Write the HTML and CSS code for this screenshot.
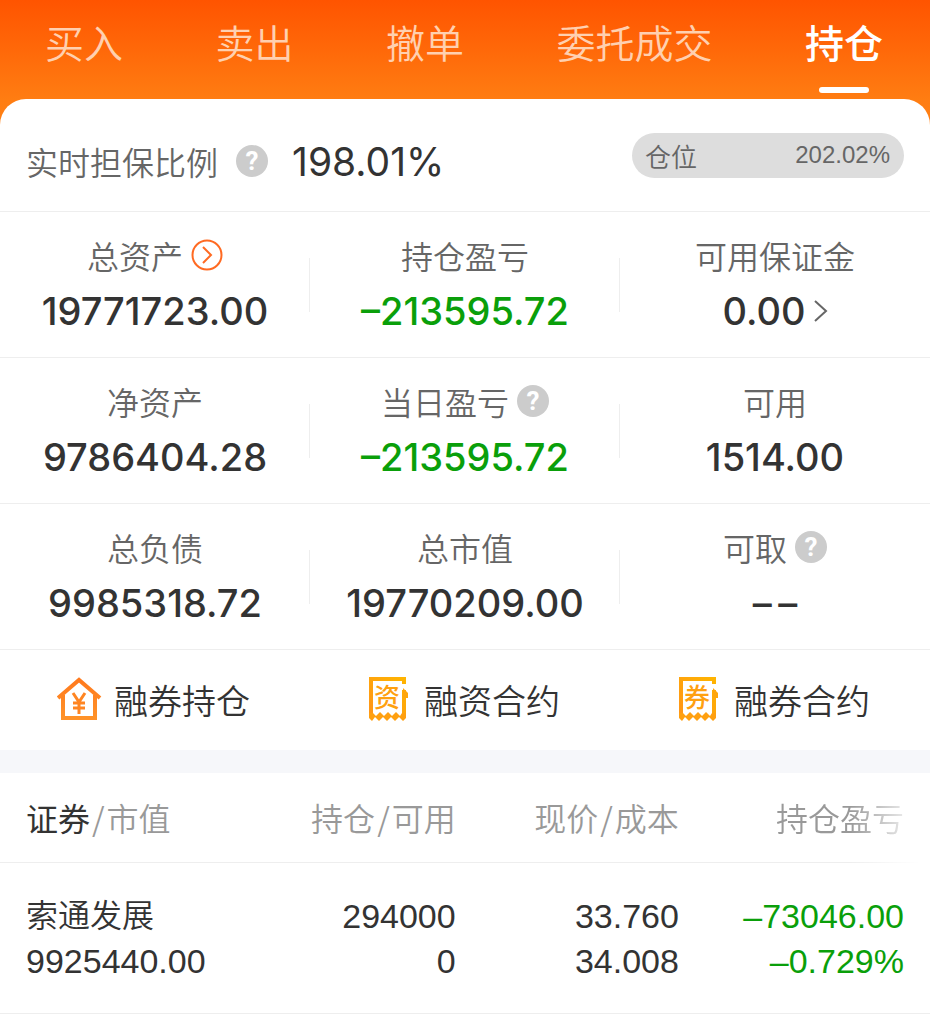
FILE: index.html
```html
<!DOCTYPE html>
<html lang="zh-CN">
<head>
    <meta charset="UTF-8">
    <meta name="viewport" content="width=device-width, initial-scale=1.0">
    <title>持仓</title>
    <link rel="stylesheet" href="styles.css">
</head>
<body>
    <nav class="tabs">
        <button class="tab">买入</button>
        <button class="tab">卖出</button>
        <button class="tab">撤单</button>
        <button class="tab">委托成交</button>
        <button class="tab active">持仓</button>
    </nav>

    <main class="card">
        <section class="summary">
            <span class="summary-label">实时担保比例</span>
            <button class="help">?</button>
            <span class="ratio">198.01%</span>
            <div class="position">
                <span>仓位</span>
                <span class="position-value">202.02%</span>
            </div>
        </section>

        <section class="metrics">
            <div class="metric">
                <div class="label">总资产
                    <button class="more" aria-label="总资产详情">
                        <svg width="32" height="32" viewBox="0 0 32 32" fill="none" stroke="#ff6a22" stroke-width="2">
                            <circle cx="16" cy="16" r="14.5"/>
                            <path d="M12 8l8 8-8 8"/>
                        </svg>
                    </button>
                </div>
                <div class="value">19771723.00</div>
            </div>
            <div class="metric">
                <div class="label">持仓盈亏</div>
                <div class="value down">–213595.72</div>
            </div>
            <div class="metric">
                <div class="label">可用保证金</div>
                <div class="value">0.00
                    <svg width="14" height="22" viewBox="0 0 14 22" fill="none" stroke="#666" stroke-width="2">
                        <path d="M1 1l11 10L1 21"/>
                    </svg>
                </div>
            </div>

            <div class="metric">
                <div class="label">净资产</div>
                <div class="value">9786404.28</div>
            </div>
            <div class="metric">
                <div class="label">当日盈亏 <button class="help">?</button></div>
                <div class="value down">–213595.72</div>
            </div>
            <div class="metric">
                <div class="label">可用</div>
                <div class="value">1514.00</div>
            </div>

            <div class="metric">
                <div class="label">总负债</div>
                <div class="value">9985318.72</div>
            </div>
            <div class="metric">
                <div class="label">总市值</div>
                <div class="value">19770209.00</div>
            </div>
            <div class="metric">
                <div class="label">可取 <button class="help">?</button></div>
                <div class="value">–&thinsp;–</div>
            </div>
        </section>

        <section class="actions">
            <a class="action" href="#">
                <svg width="46" height="46" viewBox="0 0 46 46">
                    <defs>
                        <linearGradient id="house" x1="0" y1="0" x2="0" y2="1">
                            <stop offset="0" stop-color="#ff7a1e"/>
                            <stop offset="1" stop-color="#ff9228"/>
                        </linearGradient>
                    </defs>
                    <path d="M1 22L22 4l21 18M6 19v23h32V19" fill="none" stroke="url(#house)" stroke-width="4"/>
                    <path d="M16 17l6 9 6-9M22 26v12M16 27h12M16 32h12" fill="none" stroke="#ff8522" stroke-width="3"/>
                </svg>
                融券持仓
            </a>
            <a class="action" href="#">
                <svg width="46" height="46" viewBox="0 0 46 46">
                    <defs>
                        <linearGradient id="bill" x1="1" y1="0" x2="0" y2="1">
                            <stop offset="0" stop-color="#ffb400"/>
                            <stop offset="1" stop-color="#ff9518"/>
                        </linearGradient>
                    </defs>
                    <path d="M37 8V3H4v37M37 14v26" fill="none" stroke="url(#bill)" stroke-width="4"/>
                    <path d="M36 12l5 5v5h-5z" fill="#ffa60c"/>
                    <path d="M2 37h4l3 3 4-4 4 4 4-4 4 4 4-4 4 4 2-3h4v5l-3 3-4-4-4 4-4-4-4 4-4-4-4 4-4-4-3 4-3-3z" fill="#ffa010"/>
                    <text class="icon-word" x="20" y="31" text-anchor="middle">资</text>
                </svg>
                融资合约
            </a>
            <a class="action" href="#">
                <svg width="46" height="46" viewBox="0 0 46 46">
                    <path d="M37 8V3H4v37M37 14v26" fill="none" stroke="url(#bill)" stroke-width="4"/>
                    <path d="M36 12l5 5v5h-5z" fill="#ffa60c"/>
                    <path d="M2 37h4l3 3 4-4 4 4 4-4 4 4 4-4 4 4 2-3h4v5l-3 3-4-4-4 4-4-4-4 4-4-4-4 4-4-4-3 4-3-3z" fill="#ffa010"/>
                    <text class="icon-word" x="20" y="31" text-anchor="middle">券</text>
                </svg>
                融券合约
            </a>
        </section>

        <table class="holdings">
            <thead>
                <tr>
                    <th><b>证券</b><i>/</i>市值</th>
                    <th>持仓<i>/</i>可用</th>
                    <th>现价<i>/</i>成本</th>
                    <th class="fade">持仓盈亏</th>
                </tr>
            </thead>
            <tbody>
                <tr>
                    <td><span class="name">索通发展</span><br>9925440.00</td>
                    <td>294000<br>0</td>
                    <td>33.760<br>34.008</td>
                    <td class="down">–73046.00<br>–0.729%</td>
                </tr>
            </tbody>
        </table>
    </main>
</body>
</html>
```
FILE: styles.css
```css
* {
    box-sizing: border-box;
}

body {
    margin: 0;
    background: #fff;
    color: #333;
    font-family: "Liberation Sans", "Noto Sans CJK SC", sans-serif;
    font-size: 32px;
    font-weight: 350;
}

button {
    padding: 0;
    border: none;
    background: none;
    font: inherit;
    cursor: pointer;
}

/* 顶部标签 */
.tabs {
    display: flex;
    justify-content: space-between;
    height: 126px;
    padding: 0 47px 0 45px;
    background: linear-gradient(#ff5400, #ff7d12 100px, #ff8014);
}

.tab {
    display: flex;
    flex-direction: column;
    align-items: center;
    height: 93px;
    padding-top: 21px;
    color: #ffd0b0;
    font-size: 39px;
    line-height: 48px;
}

.active {
    color: #fff;
    font-weight: 500;
}

.active::after {
    content: "";
    width: 50px;
    height: 6px;
    margin-top: 18px;
    border-radius: 3px;
    background: #fff;
}

/* 白色卡片 */
.card {
    margin-top: -27px;
    border-radius: 26px 26px 0 0;
    background: #fff;
}

.summary {
    display: flex;
    align-items: center;
    height: 113px;
    padding: 12px 26px 0;
    border-bottom: 1px solid #eee;
}

.summary-label {
    margin-right: 18px;
    color: #666;
}

.help {
    width: 32px;
    height: 32px;
    border-radius: 50%;
    background: #ccc;
    color: #fff;
    font-family: Roboto, sans-serif;
    font-size: 26px;
    font-weight: 700;
    line-height: 33px;
    text-align: center;
}

.ratio {
    margin-left: 24px;
    font-family: Inter, sans-serif;
    font-size: 39px;
    font-weight: 400;
}

.position {
    display: flex;
    justify-content: space-between;
    align-items: center;
    width: 272px;
    height: 45px;
    margin: 0 0 12px auto;
    padding: 0 14px 0 13px;
    border-radius: 23px;
    background: #ddd;
    color: #666;
    font-size: 26px;
}

.position-value {
    font-size: 24px;
}

/* 资产数据 */
.metrics {
    display: grid;
    grid-template-columns: repeat(3, 1fr);
}

.metric {
    height: 146px;
    padding-top: 20px;
    border-bottom: 1px solid #eee;
    background: linear-gradient(#eee, #eee) right center / 1px 54px no-repeat;
}

.metric:nth-child(3n) {
    background: none;
}

.label,
.value {
    display: flex;
    justify-content: center;
    align-items: center;
    gap: 8px;
}

.label {
    height: 46px;
    color: #666;
}

.value {
    height: 66px;
    font-family: Inter, sans-serif;
    font-size: 38px;
    font-weight: 500;
}

.more,
.more svg {
    display: block;
}

.down {
    color: #0a9f0a;
}

/* 快捷入口 */
.actions {
    display: grid;
    grid-template-columns: repeat(3, 1fr);
    height: 100px;
}

.action {
    display: flex;
    justify-content: center;
    align-items: center;
    gap: 11px;
    padding: 0 3px 2px 0;
    color: #333;
    font-size: 34px;
    text-decoration: none;
}

.icon-word {
    fill: #ffa010;
    font-family: "Noto Sans CJK SC", sans-serif;
    font-size: 26px;
    font-weight: 500;
}

/* 持仓列表 */
.holdings {
    width: 100%;
    border-top: 23px solid #f6f7fa;
    border-collapse: separate;
    border-spacing: 0;
    table-layout: fixed;
}

.holdings th,
.holdings td {
    width: 24%;
    border-bottom: 1px solid #eee;
    text-align: right;
}

.holdings th {
    height: 90px;
    padding: 0 0 2px;
    color: #999;
    font-weight: 350;
}

.holdings td {
    padding: 30px 0 29px;
    font-size: 34px;
    line-height: 45px;
}

.holdings th:first-child,
.holdings td:first-child {
    width: 25%;
    padding-left: 26px;
    text-align: left;
}

.holdings th:last-child,
.holdings td:last-child {
    width: 27%;
    padding-right: 26px;
}

.holdings b {
    color: #333;
    font-weight: 400;
}

.holdings i {
    margin: 0 2px;
    font-family: "Noto Sans CJK SC", sans-serif;
    font-style: normal;
}

.name {
    font-size: 32px;
}

/* 表头右侧渐隐 */
.fade {
    -webkit-mask-image: linear-gradient(to left, transparent 10px, #000 80px);
    mask-image: linear-gradient(to left, transparent 10px, #000 80px);
}
```
